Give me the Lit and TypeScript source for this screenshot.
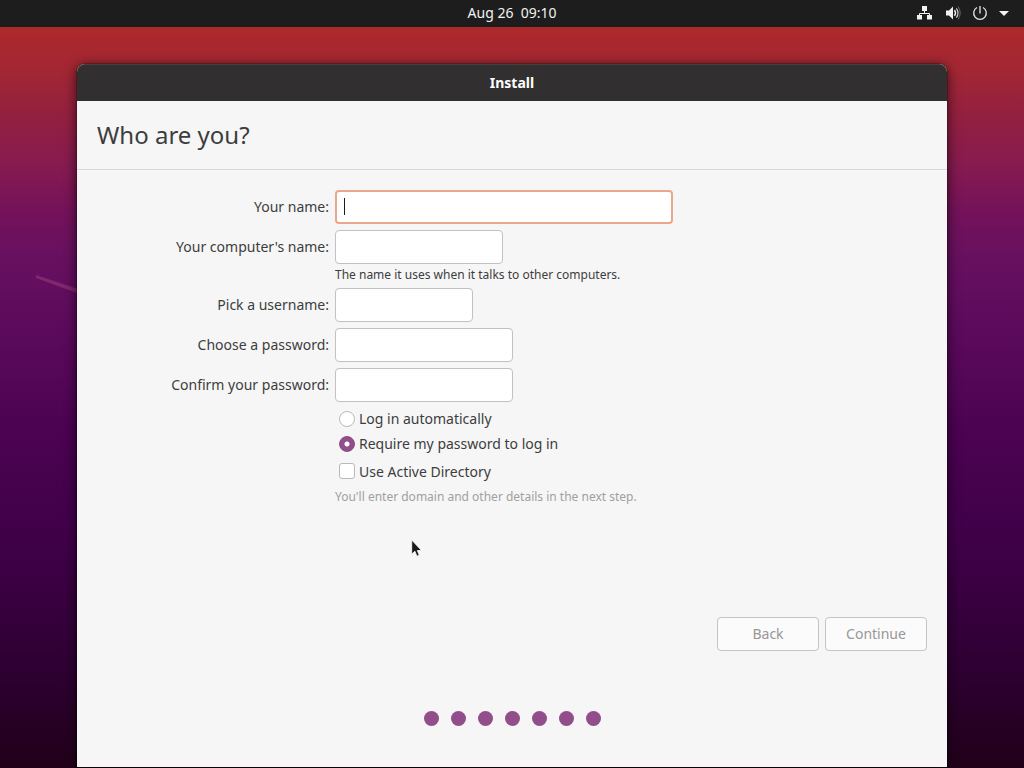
import { LitElement, html, css } from "lit";
import { customElement, property } from "lit/decorators.js";

@customElement("top-bar")
class TopBar extends LitElement {
  static styles = css`
    :host {
      display: grid;
      grid-template-columns: 1fr auto 1fr;
      align-items: center;
      height: 27px;
      flex: none;
      background: #1d1d1d;
      color: #f2f2f2;
      font-size: 14px;
      line-height: 20px;
    }
    .clock {
      grid-column: 2;
      padding-bottom: 2px;
      white-space: pre;
    }
    .status {
      display: flex;
      justify-content: flex-end;
      align-items: center;
      gap: 11px;
      padding-right: 15px;
      padding-bottom: 1px;
    }
    .icon {
      display: block;
      width: 16px;
      height: 16px;
      overflow: visible;
    }
    .arrow {
      width: 10px;
    }
  `;

  render() {
    return html`
      <time class="clock">Aug 26  09:10</time>
      <div class="status">
        <svg class="icon" viewBox="0 0 16 16" role="img" aria-label="Wired network">
          <path d="M4 1h5v5H4zM-1 10h5v4.500h-5zM9 10h5v4.500H9z" fill="#f2f2f2" />
          <path d="M6.500 6v2M1.500 10.500V8.500h10v2" fill="none" stroke="#f2f2f2" />
        </svg>
        <svg class="icon" viewBox="0 0 16 16" role="img" aria-label="Volume">
          <path d="M1 5.500h3L8 1.500v13L4 10.500H1z" fill="#f2f2f2" />
          <path d="M9.500 5.200q2 2.800 0 5.600" fill="none" stroke="#f2f2f2" stroke-width="1.400" />
          <path d="M11.400 3.300q3.200 4.700 0 9.400" fill="none" stroke="#d0d0d0" stroke-width="1.200" />
          <path d="M13.200 1.600q4 6.400 0 12.800" fill="none" stroke="#6a6a6a" />
        </svg>
        <svg class="icon" viewBox="0 0 16 16" role="img" aria-label="Power">
          <path d="M8 1v7.500M5 2.500a6.300 6.300 0 1 0 6 0" fill="none" stroke="#e6e6e6" stroke-width="1.300" />
        </svg>
        <svg class="icon arrow" viewBox="0 0 10 16" role="img" aria-label="Menu">
          <path d="M0 6h10L5 11z" fill="#f2f2f2" />
        </svg>
      </div>
    `;
  }
}

@customElement("step-dots")
class StepDots extends LitElement {
  @property({ type: Number }) count = 7;

  static styles = css`
    :host {
      display: flex;
      justify-content: center;
      gap: 12px;
    }
    .dot {
      width: 15px;
      height: 15px;
      border-radius: 50%;
      background: #924d8b;
    }
  `;

  render() {
    return Array.from({ length: this.count }, () => html`<span class="dot"></span>`);
  }
}

@customElement("user-form")
class UserForm extends LitElement {
  static styles = css`
    :host {
      display: block;
      flex: 1;
    }
    .form {
      display: grid;
      grid-template-columns: 232px 1fr;
      gap: 6px;
    }
    .label {
      height: 34px;
      line-height: 34px;
      text-align: right;
      white-space: nowrap;
    }
    .field {
      box-sizing: border-box;
      display: block;
      height: 34px;
      max-width: 100%;
      margin: 0;
      padding: 0 8px;
      border: 1px solid #c3c1bf;
      border-radius: 4px;
      background: #fff;
      color: #3d3d3d;
      font: inherit;
      outline: none;
    }
    .full {
      width: 338px;
      border: 2px solid #e9a78c;
      background: linear-gradient(#1d1d1d, #1d1d1d) 7px 6px / 1px 17px no-repeat #fff;
    }
    .host {
      width: 168px;
    }
    .user {
      width: 138px;
    }
    .pass {
      width: 178px;
    }
    .hint {
      display: block;
      padding-top: 4px;
      font-size: 12px;
      line-height: 14px;
    }
    .muted {
      grid-column: 2;
      color: #a0a0a0;
    }
    .options {
      grid-column: 2;
      margin: -2px 0 -6px;
      padding-left: 4px;
    }
    .option {
      display: flex;
      align-items: center;
      gap: 4px;
      height: 25px;
    }
    .check {
      height: 30px;
    }
    .mark {
      appearance: none;
      box-sizing: border-box;
      flex: none;
      width: 16px;
      height: 16px;
      margin: 0;
      border: 1px solid #bbb9b7;
      border-radius: 3px;
      background: #fff;
    }
    .radio {
      border-radius: 50%;
    }
    .radio:checked {
      border-color: #8a4a83;
      background: radial-gradient(circle, #fff 2px, #924d8b 3px);
    }
  `;

  render() {
    return html`
      <form class="form">
        <label class="label" for="name">Your name:</label>
        <input class="field full" id="name" type="text" />
        <label class="label" for="host">Your computer's name:</label>
        <div>
          <input class="field host" id="host" type="text" aria-describedby="host-hint" />
          <span class="hint" id="host-hint">The name it uses when it talks to other computers.</span>
        </div>
        <label class="label" for="user">Pick a username:</label>
        <input class="field user" id="user" type="text" />
        <label class="label" for="pass">Choose a password:</label>
        <input class="field pass" id="pass" type="password" />
        <label class="label" for="confirm">Confirm your password:</label>
        <input class="field pass" id="confirm" type="password" />
        <div class="options">
          <label class="option"><input class="mark radio" type="radio" name="login" />Log in automatically</label>
          <label class="option"><input class="mark radio" type="radio" name="login" checked />Require my password to log in</label>
          <label class="option check"><input class="mark" type="checkbox" />Use Active Directory</label>
        </div>
        <span class="hint muted">You'll enter domain and other details in the next step.</span>
      </form>
    `;
  }
}

@customElement("app-root")
class AppRoot extends LitElement {
  static styles = css`
    :host {
      display: flex;
      flex-direction: column;
      position: relative;
      min-height: 100vh;
      overflow: hidden;
      font-family: "Noto Sans", "Open Sans", sans-serif;
      font-size: 14px;
      color: #3d3d3d;
      background: linear-gradient(
        #ad292b 27px,
        #a32733 70px,
        #93203f 115px,
        #871b4f 163px,
        #74125a 211px,
        #671060 258px,
        #5c0a5c 330px,
        #4c0352 425px,
        #3f0048 545px,
        #320038 640px,
        #280028 712px,
        #22001a 768px
      );
    }
    .streak {
      position: absolute;
      left: 36px;
      top: 275px;
      width: 60px;
      height: 25px;
    }
    .desktop {
      display: flex;
      flex: 1;
      padding: 37px 77px 1px;
    }
    .window {
      display: flex;
      flex-direction: column;
      flex: 1;
      position: relative;
      border-radius: 8px 8px 0 0;
      background: #f6f6f6;
      box-shadow: 0 2px 12px 1px rgba(0, 0, 0, 0.6), 0 0 0 1px rgba(0, 0, 0, 0.2);
    }
    .title {
      box-sizing: border-box;
      height: 37px;
      border-top: 1px solid #45403d;
      border-radius: 8px 8px 0 0;
      background: #312f2f;
      color: #fff;
      font-weight: 700;
      line-height: 36px;
      text-align: center;
    }
    .heading {
      margin: 0;
      padding: 0 20px;
      border-bottom: 1px solid #dcdad8;
      font-size: 24px;
      font-weight: 400;
      line-height: 68px;
    }
    .body {
      display: flex;
      flex-direction: column;
      flex: 1;
      padding: 20px 20px 41px;
    }
    .actions {
      display: flex;
      justify-content: flex-end;
      gap: 6px;
      margin-bottom: 60px;
    }
    .button {
      width: 102px;
      height: 34px;
      padding: 0 0 2px;
      border: 1px solid #c6c4c2;
      border-radius: 4px;
      background: #fbfbfb;
      color: #979797;
      font: inherit;
    }
    .pointer {
      position: absolute;
      left: 411px;
      top: 539px;
      width: 12px;
      height: 20px;
    }
  `;

  render() {
    return html`
      <svg class="streak" viewBox="0 0 60 25" aria-hidden="true">
        <path d="M0 0L60 20v5L0 3z" fill="#a2407c" opacity="0.5" />
      </svg>
      <top-bar></top-bar>
      <div class="desktop">
        <main class="window">
          <div class="title">Install</div>
          <h1 class="heading">Who are you?</h1>
          <div class="body">
            <user-form></user-form>
            <div class="actions">
              <button class="button" type="button" disabled>Back</button>
              <button class="button" type="button" disabled>Continue</button>
            </div>
            <step-dots .count=${7}></step-dots>
          </div>
        </main>
      </div>
      <svg class="pointer" viewBox="0 0 12 20" aria-hidden="true">
        <path d="M.7 1v14.200l3.200-3 2 5 2.400-1-2-4.700h4.200z" fill="#1a1a1a" stroke="#fff" stroke-width="0.800" />
      </svg>
    `;
  }
}
